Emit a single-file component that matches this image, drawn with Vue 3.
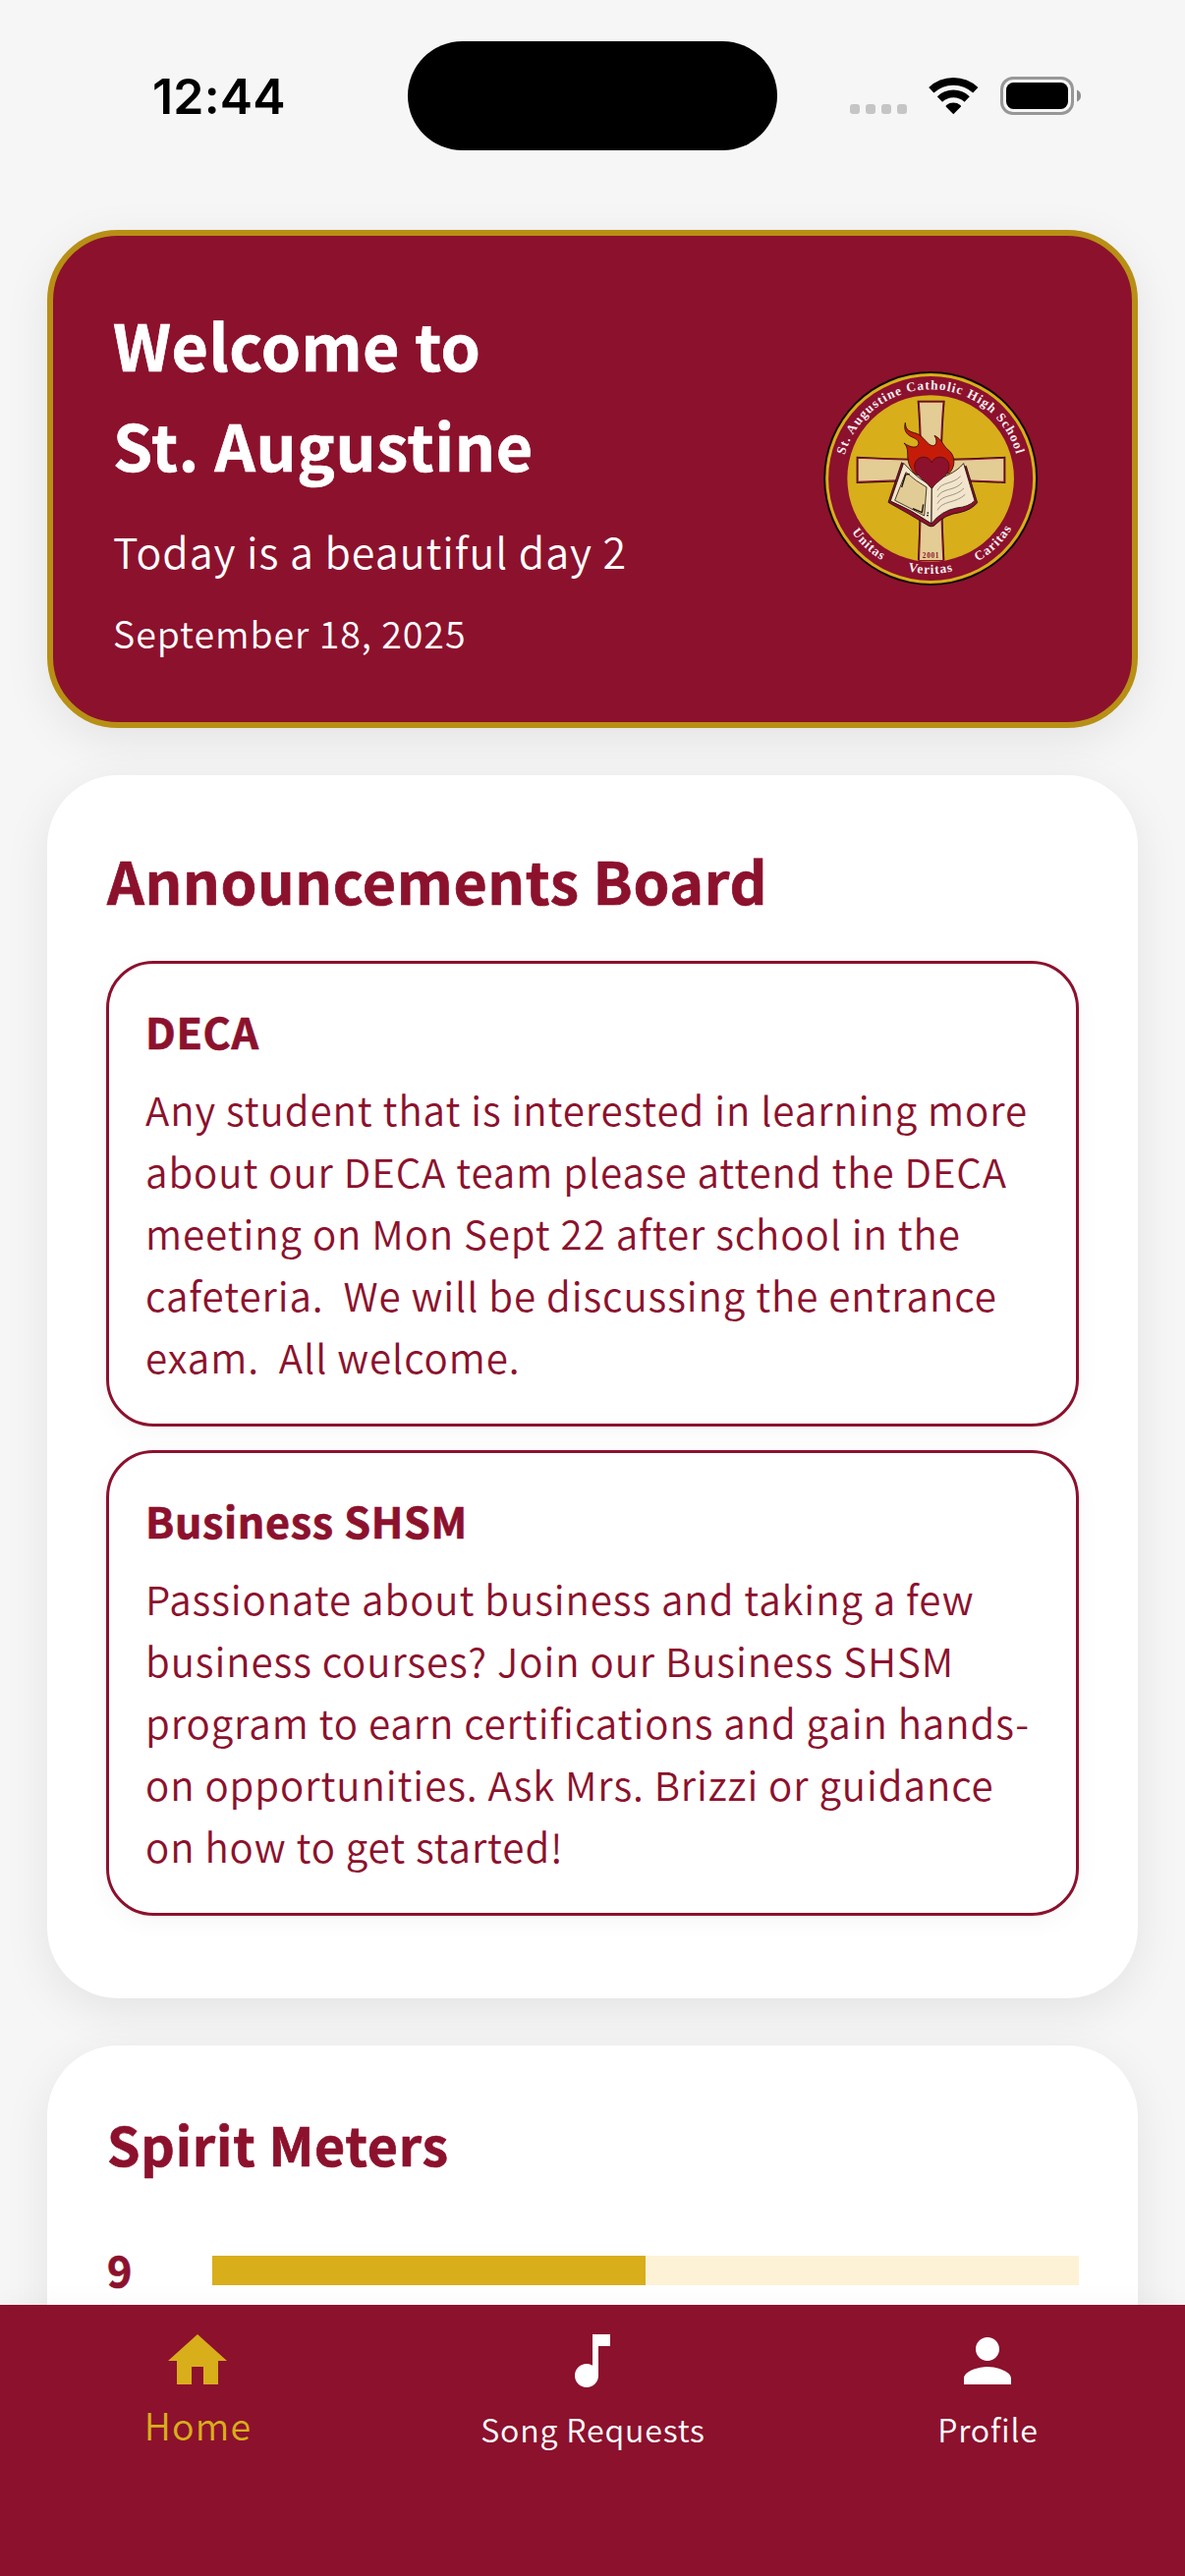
<script setup>
const announcements = [
  {
    title: 'DECA',
    lines: [
      'Any student that is interested in learning more',
      'about our DECA team please attend the DECA',
      'meeting on Mon Sept 22 after school in the',
      'cafeteria.  We will be discussing the entrance',
      'exam.  All welcome.',
    ],
  },
  {
    title: 'Business SHSM',
    lines: [
      'Passionate about business and taking a few',
      'business courses? Join our Business SHSM',
      'program to earn certifications and gain hands-',
      'on opportunities. Ask Mrs. Brizzi or guidance',
      'on how to get started!',
    ],
  },
]

const meters = [{ grade: '9', value: 50 }]

const tabs = [
  { label: 'Home', active: true, icon: 'M10 20v-6h4v6h5v-8h3L12 3 2 12h3v8z' },
  {
    label: 'Song Requests',
    active: false,
    icon: 'M12 3v10.55c-.59-.34-1.27-.55-2-.55-2.21 0-4 1.79-4 4s1.79 4 4 4 4-1.79 4-4V7h4V3h-6z',
  },
  {
    label: 'Profile',
    active: false,
    icon: 'M12 12c2.21 0 4-1.79 4-4s-1.79-4-4-4-4 1.79-4 4 1.79 4 4 4zm0 2c-2.67 0-8 1.34-8 4v2h16v-2c0-2.66-5.33-4-8-4z',
  },
]
</script>

<template>
  <div class="screen">
    <header class="status">
      <div class="time">12:44</div>
      <div class="island"></div>
      <svg class="indicators" width="236" height="40" viewBox="0 0 236 40">
        <g fill="#c5c5c5">
          <rect x="0" y="28" width="10" height="10" rx="3" />
          <rect x="16" y="28" width="10" height="10" rx="3" />
          <rect x="32" y="28" width="10" height="10" rx="3" />
          <rect x="48" y="28" width="10" height="10" rx="3" />
        </g>
        <g fill="none" stroke="#000" stroke-width="7.6">
          <path d="M82.8 13.8A32.7 32.7 0 0 1 127.8 13.8" />
          <path d="M91.4 22.9A20.2 20.2 0 0 1 119.2 22.9" />
        </g>
        <path d="M105.3 38.3L97.6 30.4Q97.4 29.6 98.2 29A11.6 11.6 0 0 1 112.4 29Q113.2 29.6 113 30.4Z" />
        <rect x="154.5" y="1.5" width="72" height="36" rx="11.5" fill="none" stroke="#979797" stroke-width="3" />
        <rect x="159" y="6" width="63" height="27" rx="7.5" />
        <path d="M231 13.5Q235 15 235 19.5T231 25.5Z" fill="#8c8c8c" />
      </svg>
    </header>

    <main class="feed">
      <section class="hero">
        <div class="hero-text">
          <h1><span class="welcome">Welcome to</span><br /><span class="school">St. Augustine</span></h1>
          <p class="day">Today is a beautiful day 2</p>
          <p class="date">September 18, 2025</p>
        </div>
        <svg class="crest" viewBox="54 53 661 661">
          <defs>
            <path id="arc-top" d="M112.5 383a272 272 0 0 1 544 0" />
            <path id="arc-bottom" d="M93.5 383a291 291 0 0 0 582 0" />
          </defs>
          <circle cx="384.5" cy="383" r="327" fill="#120a04" />
          <circle cx="384.5" cy="383" r="321" fill="#d8ae1b" />
          <circle cx="384.5" cy="383" r="312" fill="#8c112d" />
          <circle cx="384.5" cy="383" r="254.5" fill="#d8ae1b" />
          <path
            class="cross"
            d="M344 145H428Q421 220 419 323Q515 321 613 316V398Q515 393 419 392Q421 520 427 633H345Q350 520 352 392Q255 393 158 398V316Q255 321 352 323Q350 220 344 145Z"
          />
          <path
            class="cross-inner"
            d="M348.500 149H423.500Q417 222 415 327Q515 325 609 320.500V393.500Q515 389 415 388Q417 520 423 634H349Q354 520 356 388Q255 389 162 393.500V320.500Q255 325 356 327Q354 222 348.500 149Z"
          />
          <path d="M296 334L255 456Q320 492 372 524Q388 536 400 523Q430 492 474 487Q510 478 527 457L493 345L485 350L388 440Z" fill="#8c112d" stroke="#1c0d08" stroke-width="2.500" />
          <path
            d="M307 213C308 238 322 240 342 246C364 254 374 282 391 283C404 282 405 266 396 252C420 262 421 284 440 297C464 318 458 352 440 368L340 372C316 350 314 325 314 305C314 290 310 282 303 275C322 288 344 294 348 276C347 262 332 260 319 252C306 243 303 230 307 213Z"
            fill="#c41c08" stroke="#2a0d05" stroke-width="2.500"
          />
          <path d="M302 336Q328 366 350 382Q376 396 388 414L387 521Q325 478 262 452Z" fill="#f2e5cb" stroke="#1c0d08" stroke-width="2.500" />
          <path d="M309 364Q340 392 372 410L365 497Q320 472 275 450Z" fill="#e2cc96" stroke="#2a1a0d" stroke-width="2.500" />
          <path d="M320 369L308 371L296 410M362 462L358 487L330 475" fill="none" stroke="#1c0d08" stroke-width="4" />
          <path d="M388 414Q403 386 438 372Q468 358 485 337L519 451Q500 470 464 473Q416 482 387 521Z" fill="#f2e5cb" stroke="#1c0d08" stroke-width="2.500" />
          <g fill="none" stroke="#8a8378" stroke-width="2.500">
            <path d="M405 420C418 392 452 402 476 376" />
            <path d="M405 440C420 410 456 424 481 395" />
            <path d="M405 460C420 430 458 442 486 413" />
            <path d="M405 480C420 450 460 460 490 432" />
          </g>
          <path d="M388 414C372 388 335 378 335 346C336 314 378 308 388 335C398 308 441 314 441 346C441 378 404 388 388 414Z" fill="#8c112d" stroke="#3a0a14" stroke-width="2" />
          <circle cx="376" cy="488" r="2.500" />
          <circle cx="375" cy="496" r="2.500" />
          <g class="motto">
            <text textLength="710"><textPath href="#arc-top" startOffset="72">St. Augustine Catholic High School</textPath></text>
            <text text-anchor="middle"><textPath href="#arc-bottom" startOffset="238">Unitas</textPath></text>
            <text text-anchor="middle"><textPath href="#arc-bottom" startOffset="457">Veritas</textPath></text>
            <text text-anchor="middle"><textPath href="#arc-bottom" startOffset="681">Caritas</textPath></text>
          </g>
          <text class="year" x="385.500" y="626" text-anchor="middle">2001</text>
        </svg>
      </section>

      <section class="card board">
        <h2>Announcements Board</h2>
        <article v-for="item in announcements" :key="item.title" class="notice">
          <h3>{{ item.title }}</h3>
          <p v-for="line in item.lines" :key="line">{{ line }}</p>
        </article>
      </section>

      <section class="card meters">
        <h2>Spirit Meters</h2>
        <div v-for="m in meters" :key="m.grade" class="meter">
          <span class="grade">{{ m.grade }}</span>
          <div class="track"><div class="fill" :style="{ width: m.value + '%' }"></div></div>
        </div>
      </section>
    </main>

    <nav class="tabs">
      <div v-for="t in tabs" :key="t.label" class="tab" :class="{ active: t.active }">
        <svg width="72" height="72" viewBox="0 0 24 24"><path :d="t.icon" fill="currentColor" /></svg>
        <span>{{ t.label }}</span>
      </div>
    </nav>
  </div>
</template>

<style>
body {
  margin: 0;
  background: #f6f6f6;
}
</style>

<style scoped>
.screen {
  width: 1206px;
  height: 2622px;
  display: flex;
  flex-direction: column;
  overflow: hidden;
  background: #f6f6f6;
  color: #8c112d;
  font-family: "Noto Sans CJK SC", "Noto Sans", sans-serif;
  font-weight: 350;
}
h1, h2, h3, p { margin: 0; }
h1, h2, h3, .grade { -webkit-text-stroke: 0.7px currentColor; }
.status {
  flex: none;
  height: 194px;
  display: flex;
  align-items: center;
}
.time {
  box-sizing: border-box;
  width: 415px;
  padding: 2px 0 0 155px;
  font: 600 50px/60px Inter, sans-serif;
  letter-spacing: 0.2px;
  color: #000;
}
.island {
  width: 376px;
  height: 111px;
  border-radius: 56px;
  background: #000;
}
.indicators {
  margin: 1px 0 0 74px;
}
.feed {
  flex: 1;
  min-height: 0;
  padding: 40px 48px 0;
  display: flex;
  flex-direction: column;
  gap: 48px;
}
.hero {
  flex: none;
  box-sizing: border-box;
  height: 507px;
  padding: 0 95px 0 61px;
  display: flex;
  align-items: center;
  justify-content: space-between;
  border: 6px solid #b88f15;
  border-radius: 72px;
  background: #8c112d;
  box-shadow: 0 12px 48px rgba(0, 0, 0, 0.08);
  color: #fff;
}
.hero-text {
  margin-top: -5px;
}
h1 {
  font-size: 64.5px;
  line-height: 102px;
  font-weight: 700;
}
.welcome { letter-spacing: 0.45px; }
.school { letter-spacing: 0.75px; }
.day {
  margin-top: 25px;
  font-size: 43px;
  line-height: 64px;
  letter-spacing: 0.95px;
}
.date {
  margin-top: 25px;
  font-size: 37.6px;
  line-height: 54px;
  letter-spacing: 0.95px;
}
.crest {
  width: 220.3px;
  height: 220.3px;
}
.cross { fill: #1c0d08; }
.cross-inner { fill: #e4cd95; stroke: #8c112d; stroke-width: 4; }
.motto {
  font: 700 40px "Liberation Serif", serif;
  fill: #f6eeee;
  letter-spacing: 3px;
}
.year {
  font: 700 22px "Liberation Serif", serif;
  letter-spacing: 2px;
  fill: #8c112d;
}
.card {
  flex: none;
  box-sizing: border-box;
  padding: 0 60px;
  border-radius: 72px;
  background: #fff;
  box-shadow: 0 12px 48px rgba(0, 0, 0, 0.08);
}
.board {
  height: 1245px;
  padding-top: 61px;
}
.board h2 {
  margin-bottom: 38px;
  padding-left: 1px;
  font-size: 59.1px;
  line-height: 90px;
  letter-spacing: 0.62px;
}
.notice {
  box-sizing: border-box;
  height: 474px;
  padding: 36px 0 0 37px;
  border: 3px solid #8c112d;
  border-radius: 48px;
  background: #fff;
  box-shadow: 0 6px 24px rgba(0, 0, 0, 0.04);
}
.notice + .notice { margin-top: 24px; }
.notice h3 {
  margin-bottom: 16px;
  font-size: 43px;
  line-height: 64px;
  letter-spacing: 0.7px;
}
.notice p {
  font-size: 40.3px;
  line-height: 63px;
  letter-spacing: 0.93px;
  white-space: pre;
}
.meters {
  height: 500px;
  padding-top: 60px;
}
.meters h2 {
  margin-bottom: 55px;
  padding-left: 1px;
  font-size: 53.7px;
  line-height: 80px;
  letter-spacing: 0.8px;
}
.meter {
  display: flex;
  align-items: center;
}
.grade {
  box-sizing: border-box;
  width: 108px;
  padding-left: 1px;
  font-size: 43px;
  line-height: 64px;
  font-weight: 700;
}
.track {
  flex: 1;
  height: 30px;
  margin-top: 4px;
  background: #fef2d6;
}
.fill {
  height: 100%;
  background: #d8ae1b;
}
.tabs {
  flex: none;
  position: relative;
  box-sizing: border-box;
  height: 276px;
  padding-top: 21px;
  display: grid;
  grid-template-columns: repeat(3, 1fr);
  background: #8c112d;
  box-shadow: 0 -3px 24px rgba(0, 0, 0, 0.03);
  color: #fff;
}
.tab {
  display: flex;
  flex-direction: column;
  align-items: center;
}
.tab span {
  margin-top: 9px;
  padding-left: 1px;
  font-size: 32.2px;
  line-height: 48px;
  letter-spacing: 0.82px;
}
.tab.active { color: #d8ae1b; }
.tab.active span {
  margin-top: 2px;
  font-size: 37.6px;
  line-height: 54px;
  letter-spacing: 1.1px;
}
</style>
